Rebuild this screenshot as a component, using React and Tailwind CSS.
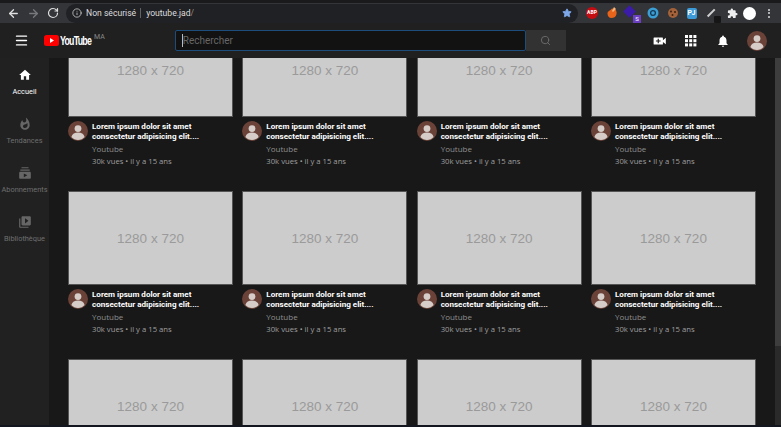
import React from "react";
import { Info, ArrowLeft, ArrowRight, RotateCw, Star, Search, Menu } from "lucide-react";

const Thumb = () => (
  <div className="h-[94px] bg-[#cccccc] border border-[#555555] flex items-center justify-center pt-[2px]">
    <span className="text-[#9a9a9a] text-[13.5px] font-['Liberation_Sans',sans-serif]">1280 x 720</span>
  </div>
);

const Avatar = ({ size = 20 }) => (
  <svg width={size} height={size} viewBox="0 0 20 20" className="shrink-0">
    <circle cx="10" cy="10" r="10" fill="#6a4238" />
    <circle cx="10" cy="7.6" r="3.4" fill="#d6cdc9" />
    <path d="M3.4 16c.6-3 3.4-4.4 6.6-4.4s6 1.4 6.6 4.400c-1.600 1.900-4 3-6.600 3s-5-1.100-6.600-3z" fill="#d6cdc9" />
  </svg>
);

const Card = ({ full }) => (
  <div className="w-[165px] h-[168px]">
    <Thumb />
    {full && (
      <div className="flex gap-[4px] mt-[4px] font-['Open_Sans',sans-serif]">
        <Avatar />
        <div className="min-w-0">
          <div className="text-[8.05px] leading-[10px] font-bold text-white mt-[1px] whitespace-nowrap font-['Roboto',sans-serif]">
            <div>Lorem ipsum dolor sit amet</div>
            <div>consectetur adipisicing elit....</div>
          </div>
          <div className="text-[8px] leading-[10px] text-[#8f8f8f] mt-[2px]">Youtube</div>
          <div className="text-[7.7px] leading-[10px] text-[#9f9f9f] mt-[2px] whitespace-nowrap">30k vues • il y a 15 ans</div>
        </div>
      </div>
    )}
  </div>
);

const Item = ({ label, active, children }) => (
  <div className="h-[49px] flex flex-col items-center">
    <div className="h-[20px] flex items-center justify-center">{children}</div>
    <div className={`text-[7.4px] leading-[10px] mt-[2px] whitespace-nowrap ${active ? "text-white" : "text-[#6f6f6f]"}`}>{label}</div>
  </div>
);

const Ext = ({ bg, children, cls = "" }) => (
  <div className={`w-[12px] h-[12px] rounded-full flex items-center justify-center text-[5px] font-bold text-white ${cls}`} style={{ background: bg }}>{children}</div>
);

export default function App() {
  return (
    <div className="w-[781px] h-[427px] overflow-hidden flex flex-col bg-[#181818] font-['Roboto','Noto_Sans',sans-serif]">
      <div className="h-[3px] bg-[#1a1a1c] shrink-0" />
      <div className="h-[20px] bg-[#333539] shrink-0 flex items-center pl-[7px] pr-[8px]">
        <ArrowLeft size={13} strokeWidth={2.4} className="text-[#e0e0e0]" />
        <ArrowRight size={13} strokeWidth={2.4} className="text-[#77797c] ml-[7px]" />
        <RotateCw size={12} strokeWidth={2.4} className="text-[#e0e0e0] ml-[7px]" />
        <div className="ml-[7px] w-[512px] h-[19px] rounded-full bg-[#202124] flex items-center pl-[6px] pr-[6px] text-[8.6px] text-[#dedede]">
          <Info size={10} className="text-[#c8c8c8]" />
          <span className="ml-[4px] whitespace-nowrap">Non sécurisé</span>
          <span className="ml-[4px] mr-[5px] w-px h-[10px] bg-[#5f6368]" />
          <span className="whitespace-nowrap">youtube.jad<span className="text-[#8e8e8e]">/</span></span>
          <Star size={10} className="ml-auto text-[#7da7e8]" fill="#7da7e8" />
        </div>
        <div className="ml-[8px] flex items-center gap-[7.5px] flex-1">
          <Ext bg="#c40d12">ABP</Ext>
          <svg width="12" height="12" viewBox="0 0 12 12"><path d="M6 1.500c4 0 5 3 4.500 5.500C10 10 7.500 11 5.500 11 3 11 1.500 9 1.500 6.500 1.500 4 4 4 6 1.500z" fill="#e8641b" /><path d="M8 0l2 2-3 3-1-1z" fill="#f2b67e" /></svg>
          <div className="relative w-[12px] h-[12px]">
            <div className="w-[9px] h-[9px] bg-[#3b1ca8] rotate-45" />
            <div className="absolute right-[-4px] bottom-[-4px] w-[8px] h-[8px] bg-[#6a3fc0] text-[6px] leading-[8px] text-center text-white">S</div>
          </div>
          <svg width="12" height="12" viewBox="0 0 12 12" className="ml-[2px]"><circle cx="6" cy="6" r="5.500" fill="#3b9ed4" /><circle cx="6" cy="6" r="2.400" fill="none" stroke="#173a55" strokeWidth="1.300" /></svg>
          <svg width="12" height="12" viewBox="0 0 12 12" className="ml-[1px]"><circle cx="6" cy="6" r="5" fill="#a4623a" /><circle cx="4" cy="4.500" r="1" fill="#3a2012" /><circle cx="8" cy="5" r="1" fill="#3a2012" /><circle cx="5.500" cy="8" r="1" fill="#3a2012" /></svg>
          <div className="w-[10px] h-[11px] rounded-[2px] bg-[#3d9ad9] text-[7px] leading-[11px] text-center text-white font-bold">PJ</div>
          <div className="relative w-[12px] h-[12px] ml-[2px]">
            <div className="absolute left-[0px] top-[5px] w-[10px] h-[1.5px] bg-[#d0d0d0] -rotate-45" />
            <div className="absolute right-[-3px] bottom-[-4px] w-[7px] h-[7px] bg-[#161616] rounded-[1px]" />
          </div>
          <svg width="11" height="11" viewBox="0 0 24 24" className="ml-[1px]"><path d="M20.500 11H19V7a2 2 0 0 0-2-2h-4V3.500a2.500 2.500 0 0 0-5 0V5H4a2 2 0 0 0-2 2v3.800h1.500a2.700 2.700 0 0 1 0 5.400H2V20a2 2 0 0 0 2 2h3.800v-1.500a2.700 2.700 0 0 1 5.400 0V22H17a2 2 0 0 0 2-2v-4h1.500a2.500 2.500 0 0 0 0-5z" fill="#eeeeee" /></svg>
        </div>
        <div className="w-[13px] h-[13px] rounded-full bg-white mr-[12px]" />
        <div className="flex flex-col gap-[1.5px] mr-[3px]">
          <span className="w-[2px] h-[2px] bg-[#d8d8d8] rounded-full" />
          <span className="w-[2px] h-[2px] bg-[#d8d8d8] rounded-full" />
          <span className="w-[2px] h-[2px] bg-[#d8d8d8] rounded-full" />
        </div>
      </div>
      <div className="h-[35px] shrink-0 bg-[#202020] flex items-center pl-[14px] pr-[14px]">
        <Menu size={15} className="text-white" strokeWidth={2.2} />
        <svg width="15" height="11" viewBox="0 0 15 11" className="ml-[15px]">
          <rect width="15" height="11" rx="2.500" fill="#f00" />
          <path d="M6 3l4 2.500L6 8z" fill="#fff" />
        </svg>
        <div className="ml-[1px] w-[33px] overflow-hidden">
          <span className="block text-white text-[12px] font-semibold tracking-[-1px] scale-x-[0.73] origin-left whitespace-nowrap font-['Liberation_Sans',sans-serif] w-[33px]">YouTube</span>
        </div>
        <span className="text-[#8a8a8a] text-[7px] leading-none self-start mt-[11px] ml-[1px]">MA</span>
        <div className="ml-[70px] w-[351px] h-[21px] bg-[#121212] border border-[#1c4d7c] rounded-[2px] flex items-center pl-[6px]">
          <span className="w-px h-[13px] bg-[#bbbbbb]" />
          <span className="text-[#666666] text-[10px]">Rechercher</span>
        </div>
        <div className="w-[40px] h-[21px] bg-[#323232] flex items-center justify-center">
          <Search size={11} className="text-[#6d6d6d]" />
        </div>
        <div className="ml-auto flex items-center">
          <svg width="14" height="14" viewBox="0 0 24 24"><path d="M17 10.500V7a1 1 0 0 0-1-1H2a1 1 0 0 0-1 1v10a1 1 0 0 0 1 1h14a1 1 0 0 0 1-1v-3.500l5 4v-11zM13 13h-3v3H8v-3H5v-2h3V8h2v3h3z" fill="#fff" /></svg>
          <svg width="12" height="12" viewBox="0 0 12 12" className="ml-[18px]" fill="#fff">
            {[0, 4.2, 8.4].flatMap((y) => [0, 4.2, 8.4].map((x) => <rect key={`${x}-${y}`} x={x} y={y} width="3" height="3" />))}
          </svg>
          <svg width="14" height="14" viewBox="0 0 24 24" className="ml-[19px]"><path d="M12 22c1.100 0 2-.9 2-2h-4c0 1.100.9 2 2 2zm6-6v-5c0-3.100-1.600-5.600-4.500-6.300V4c0-.8-.7-1.500-1.500-1.500s-1.500.7-1.500 1.500v.7C7.600 5.400 6 7.900 6 11v5l-2 2v1h16v-1z" fill="#fff" /></svg>
          <div className="ml-[17px]"><Avatar /></div>
        </div>
      </div>
      <div className="flex-1 min-h-0 flex">
        <div className="w-[49px] shrink-0 bg-[#212121] pt-[7px]">
          <Item label="Accueil" active>
            <svg width="14" height="14" viewBox="0 0 24 24"><path d="M10 20v-6h4v6h5v-8h3L12 3 2 12h3v8z" fill="#fff" /></svg>
          </Item>
          <Item label="Tendances">
            <svg width="14" height="14" viewBox="0 0 24 24"><path d="M13.500 1s.7 2.600.7 4.700c0 2-1.300 3.600-3.300 3.600S7.500 7.700 7.500 5.700l.1-.8C5.600 7.300 4 10.500 4 14c0 4.400 3.600 8 8 8s8-3.600 8-8c0-5.400-2.600-10.200-6.500-13zM11.700 19c-1.800 0-3.200-1.400-3.200-3.100 0-1.600 1-2.700 2.800-3.100 1.800-.4 3.600-1.200 4.600-2.600.4 1.300.6 2.600.6 4 0 2.700-2.100 4.800-4.800 4.800z" fill="#666" /></svg>
          </Item>
          <Item label="Abonnements">
            <svg width="14" height="14" viewBox="0 0 24 24"><path d="M20 8H4V6h16zm-2-6H6v2h12zm4 10v8c0 1.100-.9 2-2 2H4c-1.100 0-2-.9-2-2v-8c0-1.100.9-2 2-2h16c1.100 0 2 .9 2 2zm-6 4l-6-3.300v6.500z" fill="#666" /></svg>
          </Item>
          <Item label="Bibliothèque">
            <svg width="14" height="14" viewBox="0 0 24 24"><path d="M4 6H2v14c0 1.100.9 2 2 2h14v-2H4zm16-4H8c-1.100 0-2 .9-2 2v12c0 1.100.9 2 2 2h12c1.100 0 2-.9 2-2V4c0-1.100-.9-2-2-2zm-8 12.500v-9l6 4.500z" fill="#666" /></svg>
          </Item>
        </div>
        <div className="flex-1 min-w-0 overflow-hidden pl-[19px]">
          <div className="-mt-[35px] grid grid-cols-[165px_165px_165px_165px] gap-x-[9.34px]">
            {Array.from({ length: 12 }).map((_, i) => <Card key={i} full={i < 8} />)}
          </div>
        </div>
        <div className="w-[6px] shrink-0 bg-[#2a2a2a]">
          <div className="h-[288px] bg-[#3d3d3d]" />
        </div>
      </div>
      <div className="h-[2px] shrink-0 bg-[#14161f]" />
    </div>
  );
}
